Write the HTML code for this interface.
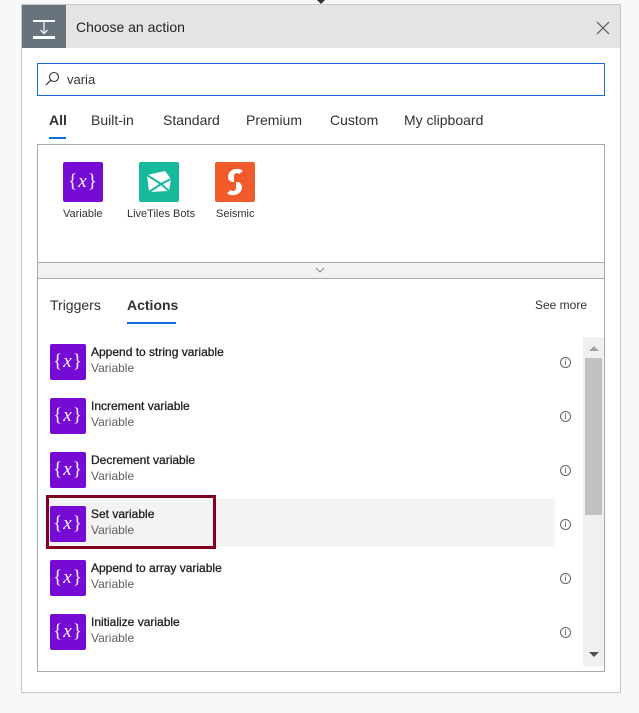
<!DOCTYPE html>
<html><head><meta charset="utf-8"><style>
*{margin:0;padding:0;box-sizing:border-box}
body{width:639px;height:713px;background:#f8f8f8;font-family:"Segoe UI","Liberation Sans",sans-serif;color:#323130;position:relative;overflow:hidden}
.a{position:absolute}
.card{left:21px;top:4px;width:600px;height:689px;background:#fff;border:1px solid #c8c8c8}
.hdr{left:22px;top:5px;width:598px;height:43px;background:#e4e4e4}
.hicon{left:22px;top:5px;width:44px;height:43px;background:#69737d}
.t{font-size:13px;white-space:nowrap}
.vi{width:36px;height:36px;background:#770bd6;border-radius:2px;color:#fff;font-family:"Liberation Serif",serif;font-size:19px;display:flex;align-items:center;justify-content:center;letter-spacing:1px}
.vi i{font-size:19px}
.info{width:11px;height:11px;border:1px solid #666;border-radius:50%;font-size:8px;line-height:9px;text-align:center;color:#444}
.rt{font-size:12px;color:#201f1e;-webkit-text-stroke:0.3px #201f1e}
.rs{font-size:12px;color:#605e5c}
</style></head><body>
<div class="a" style="left:317px;top:0;width:0;height:0;border-left:4px solid transparent;border-right:4px solid transparent;border-top:4px solid #333"></div>
<div class="a card"></div>
<div class="a hdr"></div>
<div class="a hicon"><svg width="44" height="43"><rect x="11" y="15" width="22" height="2" fill="#fff"/><rect x="11" y="31" width="22" height="3" fill="#fff"/><line x1="22" y1="17" x2="22" y2="28" stroke="#fff" stroke-width="1.2"/><path d="M18.5 25 L22 28.5 L25.5 25" stroke="#fff" fill="none" stroke-width="1.2"/></svg></div>
<div class="a t" style="left:76px;top:19px;font-size:14px;color:#222">Choose an action</div>
<svg class="a" style="left:596px;top:21px" width="14" height="14"><path d="M1 1L13 13M13 1L1 13" stroke="#555" stroke-width="1.2"/></svg>
<div class="a" style="left:37px;top:63px;width:568px;height:33px;border:1px solid #1a6be0"></div>
<svg class="a" style="left:44px;top:71px" width="16" height="16"><circle cx="10" cy="6" r="4.5" stroke="#333" fill="none" stroke-width="1.1"/><path d="M6.8 9.2L2 14" stroke="#333" stroke-width="1.2"/></svg>
<div class="a t" style="left:67px;top:72px;font-size:13px">varia</div>
<div class="a t" style="left:49px;top:112px;font-size:14px;font-weight:600">All</div>
<div class="a" style="left:49px;top:137px;width:17px;height:2px;background:#0f6cdf"></div>
<div class="a t" style="left:91px;top:112px;font-size:14px">Built-in</div>
<div class="a t" style="left:163px;top:112px;font-size:14px">Standard</div>
<div class="a t" style="left:246px;top:112px;font-size:14px">Premium</div>
<div class="a t" style="left:330px;top:112px;font-size:14px">Custom</div>
<div class="a t" style="left:404px;top:112px;font-size:14px">My clipboard</div>
<div class="a" style="left:37px;top:144px;width:568px;height:528px;border:1px solid #a8a8a8"></div>
<div class="a vi" style="left:63px;top:162px;width:40px;height:40px">{<i>x</i>}</div>
<div class="a" style="left:139px;top:162px;width:40px;height:40px;background:#16b99b;border-radius:2px"><svg width="40" height="40"><path d="M8 13 L26 9 L32 17 L30 29 L10 30 Z" fill="#fff"/><path d="M8 13 L22 22 L32 17 M22 22 L10 30 M22 22 L30 29" stroke="#16b99b" stroke-width="2" fill="none"/></svg></div>
<div class="a" style="left:215px;top:162px;width:40px;height:40px;background:#f15a2b;border-radius:2px"><svg width="40" height="40"><path d="M21 7 A8 8 0 0 0 13 15 A5 5 0 0 0 18 20 L19 20 L19 15 A3 3 0 0 1 24 12 L28 9 A8 8 0 0 0 21 7 Z M19 33 A8 8 0 0 0 27 25 A5 5 0 0 0 22 20 L21 20 L21 25 A3 3 0 0 1 16 28 L12 31 A8 8 0 0 0 19 33 Z" fill="#fff"/></svg></div>
<div class="a t" style="left:63px;top:208px;font-size:11px">Variable</div>
<div class="a t" style="left:127px;top:208px;font-size:11px">LiveTiles Bots</div>
<div class="a t" style="left:216px;top:208px;font-size:11px">Seismic</div>
<div class="a" style="left:38px;top:262px;width:566px;height:17px;background:#f2f2f2;border-top:1px solid #a8a8a8;border-bottom:1px solid #a8a8a8"></div>
<svg class="a" style="left:315px;top:267px" width="10" height="6"><path d="M1 1L5 5L9 1" stroke="#888" fill="none"/></svg>
<div class="a t" style="left:50px;top:297px;font-size:14px">Triggers</div>
<div class="a t" style="left:127px;top:297px;font-size:14px;font-weight:600">Actions</div>
<div class="a" style="left:127px;top:322px;width:49px;height:2px;background:#0f6cdf"></div>
<div class="a t" style="left:535px;top:298px;font-size:12px">See more</div>
<div class="a" style="left:45px;top:499px;width:510px;height:48px;background:#f3f3f3"></div>
<div class="a" style="left:46px;top:495px;width:170px;height:54px;border:3px solid #800020"></div>

<div class="a vi" style="left:50px;top:344px">{<i>x</i>}</div><div class="a t rt" style="left:91px;top:345px">Append to string variable</div><div class="a t rs" style="left:91px;top:361px">Variable</div><div class="a info" style="left:560px;top:357px">i</div>
<div class="a vi" style="left:50px;top:398px">{<i>x</i>}</div><div class="a t rt" style="left:91px;top:399px">Increment variable</div><div class="a t rs" style="left:91px;top:415px">Variable</div><div class="a info" style="left:560px;top:411px">i</div>
<div class="a vi" style="left:50px;top:452px">{<i>x</i>}</div><div class="a t rt" style="left:91px;top:453px">Decrement variable</div><div class="a t rs" style="left:91px;top:469px">Variable</div><div class="a info" style="left:560px;top:465px">i</div>
<div class="a vi" style="left:50px;top:506px">{<i>x</i>}</div><div class="a t rt" style="left:91px;top:507px">Set variable</div><div class="a t rs" style="left:91px;top:523px">Variable</div><div class="a info" style="left:560px;top:519px">i</div>
<div class="a vi" style="left:50px;top:560px">{<i>x</i>}</div><div class="a t rt" style="left:91px;top:561px">Append to array variable</div><div class="a t rs" style="left:91px;top:577px">Variable</div><div class="a info" style="left:560px;top:573px">i</div>
<div class="a vi" style="left:50px;top:614px">{<i>x</i>}</div><div class="a t rt" style="left:91px;top:615px">Initialize variable</div><div class="a t rs" style="left:91px;top:631px">Variable</div><div class="a info" style="left:560px;top:627px">i</div>

<div class="a" style="left:583px;top:337px;width:21px;height:329px;background:#f0f0f0"></div>
<div class="a" style="left:585px;top:358px;width:17px;height:157px;background:#c1c1c1"></div>
<div class="a" style="left:589px;top:346px;width:0;height:0;border-left:5px solid transparent;border-right:5px solid transparent;border-bottom:5px solid #a3a3a3"></div>
<div class="a" style="left:589px;top:652px;width:0;height:0;border-left:5px solid transparent;border-right:5px solid transparent;border-top:5px solid #505050"></div>
</body></html>
